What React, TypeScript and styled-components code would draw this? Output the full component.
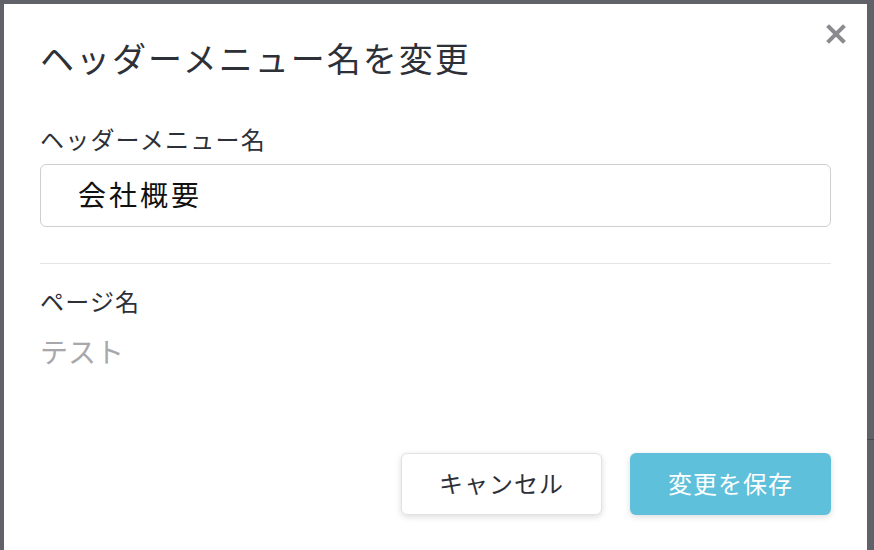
import React from 'react';
import styled, { createGlobalStyle } from 'styled-components';

const GlobalStyle = createGlobalStyle`
  html, body {
    margin: 0;
    padding: 0;
    width: 100%;
    height: 100%;
    overflow: hidden;
    background: #ffffff;
    font-family: "Noto Sans CJK JP", "Noto Sans", "Liberation Sans", sans-serif;
  }
`;

const App = () => {
  return (
    <>
      <GlobalStyle />
      <BackPage>
        <BackRule />
      </BackPage>
      <Overlay>
        <Modal>
          <CloseButton aria-label="閉じる">
            <svg width="20" height="20" viewBox="0 0 20 20">
              <path d="M3 3 L17 17 M17 3 L3 17" stroke="#8b8b8f" strokeWidth="4" strokeLinecap="square" />
            </svg>
          </CloseButton>
          <Title>ヘッダーメニュー名を変更</Title>
          <FieldLabel>ヘッダーメニュー名</FieldLabel>
          <TextInput defaultValue="会社概要" />
          <Divider />
          <FieldLabel $compact>ページ名</FieldLabel>
          <StaticValue>テスト</StaticValue>
          <ButtonRow>
            <Button>キャンセル</Button>
            <Button $primary>変更を保存</Button>
          </ButtonRow>
        </Modal>
      </Overlay>
    </>
  );
};

const BackPage = styled.div`
  width: 874px;
  height: 550px;
  display: flex;
  flex-direction: column;
  align-items: flex-end;
`;

const BackRule = styled.div`
  margin-top: 439px;
  width: 20px;
  height: 1px;
  background: #b0b0b0;
`;

const Overlay = styled.div`
  position: fixed;
  inset: 0;
  background: rgba(22, 22, 34, 0.68);
  padding: 4px 0 0 4px;
`;

const Modal = styled.div`
  position: relative;
  width: 863px;
  min-height: 600px;
  box-sizing: border-box;
  padding: 30px 36px 0 36px;
  background: #ffffff;
  display: flex;
  flex-direction: column;
  color: #2e3038;
`;

const CloseButton = styled.button`
  position: absolute;
  top: 20px;
  right: 21px;
  width: 20px;
  height: 20px;
  padding: 0;
  border: none;
  background: transparent;
  display: flex;
  cursor: pointer;
`;

const Title = styled.h2`
  margin: 0;
  font-size: 34px;
  line-height: 48px;
  font-weight: 400;
  letter-spacing: 2px;
`;

const FieldLabel = styled.div<{ $compact?: boolean }>`
  margin-top: ${(p) => (p.$compact ? '19px' : '39px')};
  font-size: 24px;
  line-height: 36px;
  letter-spacing: 1.2px;
`;

const TextInput = styled.input`
  margin-top: 7px;
  height: 63px;
  box-sizing: border-box;
  width: 100%;
  border: 1px solid #cfcfd3;
  border-radius: 6px;
  padding: 0 0 3px 37px;
  font-family: inherit;
  font-size: 28px;
  letter-spacing: 3px;
  color: #111;
  outline: none;
`;

const Divider = styled.hr`
  margin: 36px 0 0 0;
  border: none;
  height: 1px;
  background: #e6e6e8;
`;

const StaticValue = styled.div`
  margin-top: 12px;
  font-size: 28px;
  line-height: 40px;
  color: #a8a8ac;
`;

const ButtonRow = styled.div`
  margin-top: 82px;
  display: flex;
  justify-content: flex-end;
  gap: 28px;
`;

const Button = styled.button<{ $primary?: boolean }>`
  width: 201px;
  height: 62px;
  padding: 0 0 4px 0;
  border-radius: 6px;
  font-family: inherit;
  font-size: 24px;
  letter-spacing: 1px;
  cursor: pointer;
  border: ${(p) => (p.$primary ? 'none' : '1px solid #e2e2e4')};
  background: ${(p) => (p.$primary ? '#5ec0da' : '#ffffff')};
  color: ${(p) => (p.$primary ? '#ffffff' : '#2e3038')};
  box-shadow: 0 2px 6px rgba(0, 0, 0, 0.14);
`;

export default App;
